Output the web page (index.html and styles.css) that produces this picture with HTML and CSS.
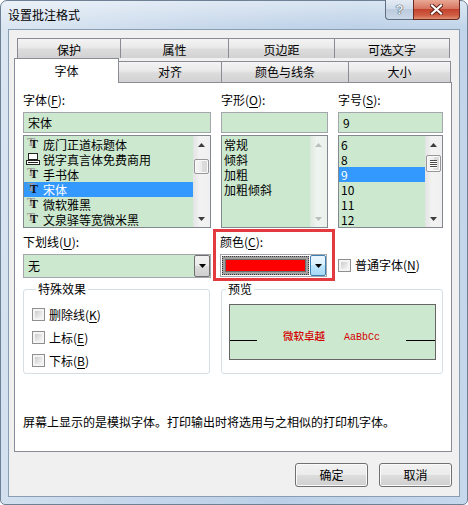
FILE: index.html
```html
<!DOCTYPE html>
<html lang="zh-CN">
<head>
<meta charset="UTF-8">
<title>设置批注格式</title>
<link rel="stylesheet" href="styles.css">
</head>
<body>
<!-- shared glyphs: printer font mark, scroll arrows, thumb grip -->
<svg class="defs" width="0" height="0" aria-hidden="true">
  <symbol id="ico-printer" viewBox="0 0 15 13">
    <rect x="2.5" y="0.5" width="9" height="6" fill="#fff" stroke="#222"/>
    <rect x="0.5" y="7.5" width="13" height="4" fill="#fff" stroke="#222"/>
    <line x1="2" y1="9.5" x2="12" y2="9.5" stroke="#222"/>
  </symbol>
  <symbol id="arr-up" viewBox="0 0 7 4"><polygon points="0,4 3.5,0 7,4" fill="currentColor"/></symbol>
  <symbol id="arr-down" viewBox="0 0 7 4"><polygon points="0,0 7,0 3.5,4" fill="currentColor"/></symbol>
  <symbol id="grip" viewBox="0 0 7 8">
    <path d="M0 0.5h7M0 2.5h7M0 4.5h7M0 6.5h7" stroke="#4a4a4a"/>
    <path d="M0 1.5h7M0 3.5h7M0 5.5h7M0 7.5h7" stroke="#fff"/>
  </symbol>
</svg>

<div class="window">
  <div class="titlebar">
    <span class="title">设置批注格式</span>
    <div class="caption-buttons">
      <span class="cap-btn cap-help">?</span>
      <span class="cap-btn cap-close">
        <svg width="13" height="11" viewBox="0 0 13 11">
          <path d="M2 1.5l9 8M11 1.5l-9 8" stroke="#5b1d14" stroke-width="4" stroke-linecap="square"/>
          <path d="M2 1.5l9 8M11 1.5l-9 8" stroke="#fff" stroke-width="2.2" stroke-linecap="square"/>
        </svg>
      </span>
    </div>
  </div>

  <div class="client">
    <div class="tab-row back">
      <div class="tab">保护</div>
      <div class="tab">属性</div>
      <div class="tab">页边距</div>
      <div class="tab last">可选文字</div>
    </div>
    <div class="tab-row front">
      <div class="tab active">字体</div>
      <div class="tab">对齐</div>
      <div class="tab">颜色与线条</div>
      <div class="tab">大小</div>
    </div>

    <div class="panel">
      <div class="font-grid">
        <div class="field">
          <div class="field-label">字体(<u>F</u>):</div>
          <div class="textbox">宋体</div>
          <div class="listbox">
            <ul class="list-items">
              <li><span class="tt">T</span>庞门正道标题体</li>
              <li><svg class="font-ico"><use href="#ico-printer"/></svg>锐字真言体免费商用</li>
              <li><span class="tt">T</span>手书体</li>
              <li class="selected"><span class="tt">T</span>宋体</li>
              <li><span class="tt">T</span>微软雅黑</li>
              <li><span class="tt">T</span>文泉驿等宽微米黑</li>
            </ul>
            <div class="vscroll">
              <span class="sb-arrow"><svg><use href="#arr-up"/></svg></span>
              <span class="sb-thumb thumb-face"></span>
              <span class="sb-track"></span>
              <span class="sb-arrow"><svg><use href="#arr-down"/></svg></span>
            </div>
          </div>
        </div>

        <div class="field">
          <div class="field-label">字形(<u>O</u>):</div>
          <div class="textbox"></div>
          <div class="listbox">
            <ul class="list-items">
              <li>常规</li>
              <li>倾斜</li>
              <li>加粗</li>
              <li>加粗倾斜</li>
            </ul>
            <div class="vscroll disabled">
              <span class="sb-arrow"><svg><use href="#arr-up"/></svg></span>
              <span class="sb-track"></span>
              <span class="sb-arrow"><svg><use href="#arr-down"/></svg></span>
            </div>
          </div>
        </div>

        <div class="field">
          <div class="field-label">字号(<u>S</u>):</div>
          <div class="textbox">9</div>
          <div class="listbox">
            <ul class="list-items">
              <li>6</li>
              <li>8</li>
              <li class="selected">9</li>
              <li>10</li>
              <li>11</li>
              <li>12</li>
            </ul>
            <div class="vscroll">
              <span class="sb-arrow"><svg><use href="#arr-up"/></svg></span>
              <span class="sb-thumb thumb-size"><svg class="grip"><use href="#grip"/></svg></span>
              <span class="sb-track"></span>
              <span class="sb-arrow"><svg><use href="#arr-down"/></svg></span>
            </div>
          </div>
        </div>
      </div>

      <div class="effects-row">
        <div class="underline-field">
          <div class="field-label">下划线(<u>U</u>):</div>
          <div class="combo">
            <span class="combo-text">无</span>
            <span class="drop-btn"><svg><use href="#arr-down"/></svg></span>
          </div>
        </div>
        <div class="color-field">
          <div class="field-label">颜色(<u>C</u>):</div>
          <div class="color-combo">
            <span class="color-value"><span class="swatch"></span></span>
            <span class="drop-btn hot"><svg><use href="#arr-down"/></svg></span>
          </div>
        </div>
        <label class="check plain-font"><span class="check-box"></span>普通字体(<u>N</u>)</label>
      </div>

      <div class="groups">
        <fieldset class="group effects-group">
          <legend>特殊效果</legend>
          <label class="check"><span class="check-box"></span>删除线(<u>K</u>)</label>
          <label class="check"><span class="check-box"></span>上标(<u>E</u>)</label>
          <label class="check"><span class="check-box"></span>下标(<u>B</u>)</label>
        </fieldset>
        <fieldset class="group preview-group">
          <legend>预览</legend>
          <div class="preview-box">
            <span class="base-line"></span>
            <span class="preview-text"><span>微软卓越</span><span class="preview-latin">AaBbCc</span></span>
            <span class="base-line right"></span>
          </div>
        </fieldset>
      </div>

      <p class="note">屏幕上显示的是模拟字体。打印输出时将选用与之相似的打印机字体。</p>
    </div>

    <div class="dialog-buttons">
      <button class="btn">确定</button>
      <button class="btn">取消</button>
    </div>
  </div>
</div>
</body>
</html>
```

FILE: styles.css
```css
* { box-sizing: border-box; }
body { margin: 0; width: 468px; height: 505px; overflow: hidden; background: #fff; font-family: "Noto Sans CJK SC", "Noto Sans", sans-serif; font-size: 12px; line-height: 16px; color: #000; }
.defs { position: absolute; width: 0; height: 0; }
u { text-decoration-thickness: 1px; text-underline-offset: 2px; }

/* window frame */
.window { width: 468px; height: 505px; border: 1px solid #6d8095; border-radius: 7px 7px 5px 5px; padding: 0 7px 7px; background: linear-gradient(rgba(255,255,255,0.45), rgba(255,255,255,0) 28px), linear-gradient(100deg, #dbe6f2 0%, #c7d8eb 35%, #bbd0e7 65%, #c6d8eb 100%); }
.titlebar { display: flex; justify-content: space-between; align-items: flex-start; height: 28px; }
.title { padding-top: 6px; line-height: 16px; }
.caption-buttons { display: flex; margin-top: -1px; }
.cap-btn { display: flex; align-items: center; justify-content: center; height: 20px; border: 1px solid #5f6f82; border-top: none; }
.cap-help { width: 28px; border-right: none; border-radius: 0 0 0 4px; background: linear-gradient(#e4ebf4, #d0dcea 45%, #bccbdd 50%, #cad8e8); color: #eef3f8; font-weight: bold; font-size: 13px; font-family: "Liberation Sans", sans-serif; text-shadow: 0 0 1px #23313f, 0 0 1px #23313f; }
.cap-close { width: 47px; border-color: #6a2a22; border-radius: 0 0 4px 0; background: linear-gradient(#e9a894, #d67661 45%, #c4432f 50%, #cf5c43 80%, #e09070); }

/* client area */
.client { height: 468px; border: 1px solid #8a9db3; background: #f0f0f0; padding: 8px 7px 0 5px; }
.tab-row { display: grid; }
.tab-row.back { grid-template-columns: 103px 108px 106px 116px; margin-left: 3px; height: 20px; }
.tab-row.front { grid-template-columns: 105px 103px 127px 102px; height: 24px; }
.tab { border: 1px solid #898c95; border-width: 1px 0 0 1px; background: linear-gradient(#f4f4f4, #e9e9e9 45%, #dcdcdc 55%, #d2d2d2); text-align: center; line-height: 16px; padding-top: 3px; }
.tab.last { border-right-width: 1px; }
.front .tab { height: 21px; margin-top: 3px; padding-top: 2px; border-width: 1px 1px 0 0; }
.front .tab.active { position: relative; z-index: 1; height: 25px; margin-top: 0; padding-top: 4px; border-width: 1px 1px 0 1px; background: #fff; }

.panel { height: 370px; border: 1px solid #898c95; background: #fff; padding: 9px 8px 0; }

/* font / style / size pickers */
.font-grid { display: grid; grid-template-columns: 188px 107px 105px; column-gap: 10px; }
.field-label { height: 16px; line-height: 16px; margin-bottom: 4px; white-space: nowrap; }
.textbox { height: 21px; border: 1px solid #a3a6ad; background: #cce8cf; padding-left: 4px; line-height: 19px; }
.listbox { display: flex; height: 93px; margin-top: 2px; border: 1px solid #828790; background: #cce8cf; }
.list-items { flex: 1; margin: 0; padding: 1px 0 0; list-style: none; }
.list-items li { display: flex; align-items: center; height: 15px; line-height: 15px; padding-left: 2px; white-space: nowrap; overflow: hidden; }
.list-items li.selected { background: #3399ff; color: #fff; }
.font-ico { width: 15px; height: 13px; margin-right: 2px; flex: none; }
/* TrueType mark: black T over a grey one */
.tt { flex: none; width: 15px; margin-right: 2px; padding-left: 4px; font: bold 12px/13px "Liberation Serif", serif; color: #111; text-shadow: -3px -2px 0 #9a9a9a; }

.vscroll { display: flex; flex-direction: column; width: 17px; background: linear-gradient(to right, #e2e3e4, #f2f2f2 40%, #f0f0f0); }
.vscroll.disabled { background: linear-gradient(to right, #dde9de, #eef4ef 40%, #ebf2ec); }
.sb-arrow { display: flex; align-items: center; justify-content: center; height: 17px; color: #3c3c3c; }
.sb-arrow svg { width: 7px; height: 4px; }
.disabled .sb-arrow { color: #b9bfba; }
.sb-track { flex: 1; }
.sb-thumb { display: flex; align-items: center; justify-content: center; margin: 0 1px; border: 1px solid #979797; border-radius: 2px; background: linear-gradient(to right, #f6f6f6, #ececec 50%, #dcdcdc 55%, #d9d9d9); box-shadow: inset 0 0 0 1px #fafafa; }
.thumb-face { height: 15px; margin-top: 6px; }
.thumb-size { height: 17px; margin-top: 2px; }
.grip { width: 7px; height: 8px; }

/* underline / colour row */
.effects-row { display: flex; align-items: flex-start; height: 52px; margin-top: 1px; }
.underline-field { width: 188px; padding-top: 5px; }
.combo { display: flex; height: 24px; border: 1px solid #a3a6ad; background: #cce8cf; }
.combo-text { flex: 1; padding-left: 4px; line-height: 22px; }
.drop-btn { display: flex; align-items: center; justify-content: center; width: 16px; border: 1px solid #707070; border-radius: 2px; background: linear-gradient(#f2f2f2, #ebebeb 50%, #dddddd 50%, #cfcfcf); color: #000; }
.drop-btn svg { width: 7px; height: 4px; }
.drop-btn.hot { border-color: #3c7fb1; background: linear-gradient(#eaf6fd, #d9f0fc 50%, #bee6fd 50%, #a7d9f5); }
.color-field { width: 122px; height: 52px; margin-left: 2px; border: 3px solid #e23a3e; padding: 2px 0 0 4px; }
.color-combo { display: flex; width: 107px; height: 23px; border: 1px solid #a3a6ad; background: #fff; }
.color-value { flex: 1; display: flex; margin: 1px; padding: 3px; background: #a0a0a0; outline: 1px dotted #3a3a3a; outline-offset: -1px; }
.swatch { flex: 1; background: #ff0000; border: 1px solid #6b6b6b; }

.check { display: flex; align-items: center; white-space: nowrap; line-height: 16px; }
.check-box { width: 13px; height: 13px; margin-right: 4px; border: 1px solid #8f8f8f; padding: 2px; background: linear-gradient(135deg, #cdcdcd, #f6f6f6) content-box, #f4f4f4; }
.plain-font { margin: 28px 0 0 3px; height: 16px; }

/* group boxes */
.groups { display: flex; column-gap: 11px; }
.group { margin: 0; padding: 0; min-width: 0; height: 93px; border: 1px solid #d5dfe5; border-radius: 3px; }
.group legend { margin-left: 4px; padding: 0 2px; line-height: 16px; }
.effects-group { width: 187px; padding: 6px 0 0 8px; }
.effects-group .check { height: 23px; }
.preview-group { width: 222px; }
.preview-box { display: flex; align-items: flex-start; width: 207px; height: 56px; margin: 7px 0 0 7px; border: 1px solid #666; background: #cce8cf; }
.base-line { width: 27px; height: 1px; margin-top: 35px; background: #000; }
.base-line.right { width: 29px; }
.preview-text { flex: 1; margin-top: 22px; line-height: 18px; text-align: center; color: #d40000; font-size: 10.5px; font-weight: 500; white-space: nowrap; }
.preview-latin { margin-left: 19px; font-family: "Liberation Mono", monospace; font-size: 10px; }

.note { margin: 40px 0 0; line-height: 16px; }

/* OK / Cancel */
.dialog-buttons { display: flex; justify-content: flex-end; gap: 11px; margin-top: 11px; }
.btn { width: 73px; height: 24px; padding: 0; border: 1px solid #707070; border-radius: 3px; background: linear-gradient(#f2f2f2, #ebebeb 50%, #dddddd 50%, #cfcfcf); box-shadow: inset 0 0 0 1px #fbfbfb; font: 12px/22px "Noto Sans CJK SC", sans-serif; color: #000; }
```
